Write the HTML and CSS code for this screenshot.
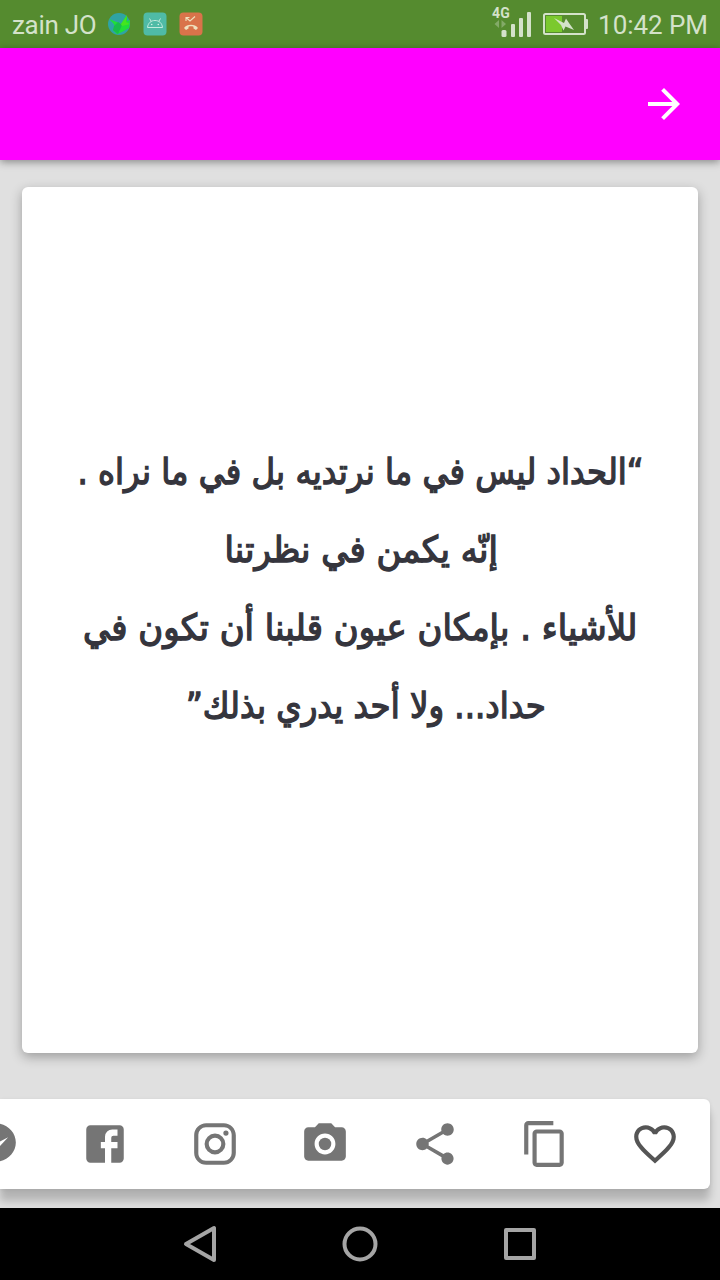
FILE: index.html
```html
<!DOCTYPE html>
<html lang="ar">
<head>
    <meta charset="UTF-8">
    <meta name="viewport" content="width=device-width, initial-scale=1.0">
    <title>Quote</title>
    <link rel="stylesheet" href="styles.css">
</head>
<body>
    <div class="status-bar">
        <div class="status-left">
            <span class="carrier">zain JO</span>
            <svg class="app-icon" viewBox="0 0 24 24">
                <circle cx="12" cy="12" r="11" fill="#2fa3a4"/>
                <path d="M2 7L11 10.5L14 12L20 3L20 9L23 8L22 16L15 20L10 22L6 18L8 14L6 11Z" fill="#20df37"/>
                <path d="M11 10L15 13L11 22L6 18L7 14Z" fill="#19bd4b"/>
                <path d="M14 12L20 3L19 10L23 12L15 14Z" fill="#45e51e"/>
            </svg>
            <svg class="app-icon" viewBox="0 0 24 24">
                <rect x="0.5" y="0.5" width="23" height="23" rx="4" fill="#4fbba6"/>
                <path d="M4.5 15.5C5 11 8 8.5 12 8.5S19 11 19.5 15.5ZM8 9L6.5 6.5M16 9L17.5 6.5" fill="none" stroke="#c5ebdd" stroke-width="1"/>
                <circle cx="8.7" cy="12.5" r="0.8" fill="#d8f2e6"/>
                <circle cx="15.3" cy="12.5" r="0.8" fill="#d8f2e6"/>
            </svg>
            <svg class="app-icon" viewBox="0 0 24 24">
                <rect x="0.5" y="0.5" width="23" height="23" rx="4" fill="#d9734a"/>
                <path d="M7 9V5.5H10.5M7 5.5L11 9L16 4.5" fill="none" stroke="#efe0bd" stroke-width="1.1"/>
                <path d="M5 16C8 11.6 16 11.6 19 16L17 18L14.5 16.5V14.7C13 14.2 11 14.2 9.5 14.7V16.5L7 18Z" fill="#efe0bd"/>
            </svg>
        </div>
        <div class="status-right">
            <div class="signal">
                <span class="network">4G</span>
                <svg width="40" height="32" viewBox="0 0 40 32">
                    <path d="M7 12V20L2.5 16ZM9.5 12V20L14 16Z" fill="#83aa68"/>
                    <g fill="#d4e2ca">
                        <rect x="9.5" y="22" width="5" height="7" rx="1.5"/>
                        <rect x="19" y="16" width="4" height="13" rx="1"/>
                        <rect x="27" y="10" width="4" height="19" rx="1"/>
                        <rect x="35" y="4" width="4" height="25" rx="1"/>
                    </g>
                </svg>
            </div>
            <svg class="battery" width="45" height="24" viewBox="0 0 45 24">
                <rect x="3" y="3" width="16" height="16" fill="#7bc92e"/>
                <rect x="1" y="1" width="41" height="20" rx="1.5" fill="none" stroke="#d4e2ca" stroke-width="2"/>
                <rect x="42.5" y="6" width="2.5" height="10" rx="1" fill="#d4e2ca"/>
                <path d="M11 5L21 10L23 5.5L26 10L31 17L22.5 13.5L20.5 17.5L18 12Z" fill="#d4e2ca"/>
            </svg>
            <span class="clock">10:42 PM</span>
        </div>
    </div>

    <header class="app-bar">
        <svg width="48" height="48" viewBox="0 0 24 24" fill="#fff">
            <path d="M12 4l-1.41 1.41L16.17 11H4v2h12.17l-5.58 5.59L12 20l8-8z"/>
        </svg>
    </header>

    <main class="content">
        <div class="card">
            <div class="quote" dir="rtl">
                <div class="line line-1"><span>“الحداد ليس في ما نرتديه بل في ما نراه .</span></div>
                <div class="line line-2"><span>إنّه يكمن في نظرتنا</span></div>
                <div class="line line-3"><span>للأشياء . بإمكان عيون قلبنا أن تكون في</span></div>
                <div class="line line-4"><span>حداد... ولا أحد يدري بذلك”</span></div>
            </div>
        </div>

        <div class="actions">
            <svg class="action" viewBox="0 0 24 24"><path d="M12,2C6.5,2 2,6.14 2,11.25C2,14.13 3.42,16.7 5.65,18.4L5.71,22L9.16,20.12C10.04,20.36 11,20.5 12,20.5C17.5,20.5 22,16.36 22,11.25C22,6.14 17.5,2 12,2M13.03,14.41L10.54,11.78L5.5,14.41L10.88,8.78L13.46,11.25L18.31,8.78L13.03,14.41Z"/></svg>
            <svg class="action" viewBox="0 0 24 24"><path d="M5,3H19A2,2 0 0,1 21,5V19A2,2 0 0,1 19,21H5A2,2 0 0,1 3,19V5A2,2 0 0,1 5,3M18,5H15.5A3.5,3.5 0 0,0 12,8.5V11H10V14H12V21H15V14H18V11H15V9A1,1 0 0,1 16,8H18V5Z"/></svg>
            <svg class="action" viewBox="0 0 24 24"><path d="M7.8,2H16.2C19.4,2 22,4.6 22,7.8V16.2A5.8,5.8 0 0,1 16.2,22H7.8C4.6,22 2,19.4 2,16.2V7.8A5.8,5.8 0 0,1 7.8,2M7.6,4A3.6,3.6 0 0,0 4,7.6V16.4C4,18.39 5.61,20 7.6,20H16.4A3.6,3.6 0 0,0 20,16.4V7.6C20,5.61 18.39,4 16.4,4H7.6M17.25,5.5A1.25,1.25 0 0,1 18.5,6.75A1.25,1.25 0 0,1 17.25,8A1.25,1.25 0 0,1 16,6.75A1.25,1.25 0 0,1 17.25,5.5M12,7A5,5 0 0,1 17,12A5,5 0 0,1 12,17A5,5 0 0,1 7,12A5,5 0 0,1 12,7M12,9A3,3 0 0,0 9,12A3,3 0 0,0 12,15A3,3 0 0,0 15,12A3,3 0 0,0 12,9Z"/></svg>
            <svg class="action" viewBox="0 0 24 24"><circle cx="12" cy="12" r="3"/><path d="M9 2L7.17 4H4c-1.1 0-2 .9-2 2v12c0 1.1.9 2 2 2h16c1.1 0 2-.9 2-2V6c0-1.1-.9-2-2-2h-3.17L15 2H9zm3 15c-2.76 0-5-2.24-5-5s2.24-5 5-5 5 2.24 5 5-2.24 5-5 5z"/></svg>
            <svg class="action" viewBox="0 0 24 24"><path d="M18 16.08c-.76 0-1.44.3-1.96.77L8.91 12.7c.05-.23.09-.46.09-.7s-.04-.47-.09-.7l7.05-4.11c.54.5 1.25.81 2.04.81 1.66 0 3-1.34 3-3s-1.34-3-3-3-3 1.34-3 3c0 .24.04.47.09.7L8.04 9.81C7.5 9.31 6.79 9 6 9c-1.66 0-3 1.34-3 3s1.34 3 3 3c.79 0 1.5-.31 2.04-.81l7.12 4.16c-.05.21-.08.43-.08.65 0 1.61 1.31 2.92 2.92 2.92s2.92-1.31 2.92-2.92-1.31-2.92-2.92-2.92z"/></svg>
            <svg class="action" viewBox="0 0 24 24"><path d="M16 1H4c-1.1 0-2 .9-2 2v14h2V3h12V1zm3 4H8c-1.1 0-2 .9-2 2v14c0 1.1.9 2 2 2h11c1.1 0 2-.9 2-2V7c0-1.1-.9-2-2-2zm0 16H8V7h11v14z"/></svg>
            <svg class="action action-like" viewBox="0 0 24 24"><path d="M16.5 3c-1.74 0-3.41.81-4.5 2.09C10.91 3.81 9.24 3 7.5 3 4.42 3 2 5.42 2 8.5c0 3.78 3.4 6.86 8.55 11.54L12 21.35l1.45-1.32C18.6 15.36 22 12.28 22 8.5 22 5.42 19.58 3 16.5 3zm-4.4 15.55l-.1.1-.1-.1C7.14 14.24 4 11.39 4 8.5 4 6.5 5.5 5 7.5 5c1.54 0 3.04.99 3.57 2.36h1.87C13.46 5.99 14.96 5 16.5 5c2 0 3.5 1.5 3.5 3.5 0 2.89-3.14 5.74-7.9 10.05z"/></svg>
        </div>
    </main>

    <nav class="nav-bar">
        <svg width="40" height="40" viewBox="0 0 40 40"><path d="M34 4V36L6 20Z"/></svg>
        <svg width="40" height="40" viewBox="0 0 40 40"><circle cx="20" cy="20" r="15.5"/></svg>
        <svg width="40" height="40" viewBox="0 0 40 40"><rect x="6" y="6" width="28" height="28"/></svg>
    </nav>
</body>
</html>
```
FILE: styles.css
```css
* {
    box-sizing: border-box;
}
body {
    margin: 0;
    width: 720px;
    height: 1280px;
    display: flex;
    flex-direction: column;
    overflow: hidden;
    background: #e0e0e0;
    font-family: Roboto, sans-serif;
}
svg {
    display: block;
    flex-shrink: 0;
}
.status-bar {
    height: 48px;
    flex-shrink: 0;
    display: flex;
    justify-content: space-between;
    padding: 0 12px;
    background: #558b2f;
    color: #d4e2ca;
    font-size: 26px;
}
.status-left, .status-right {
    display: flex;
    align-items: center;
}
.status-left {
    gap: 12px;
}
.carrier, .clock {
    line-height: 48px;
    padding-top: 2px;
    white-space: nowrap;
}
.carrier {
    width: 83px;
    letter-spacing: -0.3px;
}
.clock {
    letter-spacing: -0.05px;
}
.app-icon {
    width: 24px;
    height: 24px;
}
.signal {
    position: relative;
    margin-right: 11px;
}
.network {
    position: absolute;
    top: -2px;
    left: 0;
    font-size: 14px;
    line-height: 14px;
    font-weight: bold;
}
.battery {
    margin: 2px 10px 0 0;
}
.app-bar {
    height: 112px;
    flex-shrink: 0;
    display: flex;
    align-items: center;
    justify-content: flex-end;
    padding-right: 32px;
    background: #ff00ff;
    box-shadow: 0 2px 8px rgba(0, 0, 0, 0.4);
    z-index: 1;
}
.content {
    flex: 1;
    min-height: 0;
    padding-top: 27px;
    overflow: hidden;
    display: flex;
    flex-direction: column;
    align-items: flex-start;
}
.card {
    width: 676px;
    height: 866px;
    flex-shrink: 0;
    margin: 0 22px 46px;
    border-radius: 6px;
    background: #fff;
    box-shadow: 0 4px 12px rgba(0, 0, 0, 0.3);
    padding-top: 246px;
}
.quote {
    color: #35353d;
    font-family: "DejaVu Sans", sans-serif;
    font-size: 36px;
    -webkit-text-stroke: 1.4px #35353d;
}
.line {
    height: 78px;
    line-height: 78px;
    display: flex;
    justify-content: center;
    white-space: nowrap;
}
/* condensed lettering */
.line span {
    transform: scaleX(0.9);
}
.line-1, .line-2 {
    padding-left: 2px;
}
.line-2 span, .line-3 span {
    transform: scaleX(0.942);
}
.line-4 {
    padding-left: 12px;
}
.actions {
    width: 710px;
    height: 90px;
    flex-shrink: 0;
    display: flex;
    align-items: center;
    justify-content: flex-end;
    gap: 60px;
    padding-right: 30px;
    background: #fff;
    border-radius: 0 6px 6px 0;
    box-shadow: 0 12px 9px rgba(0, 0, 0, 0.2), 0 1px 4px rgba(0, 0, 0, 0.08);
}
.action {
    width: 50px;
    height: 50px;
    fill: #757575;
}
.action-like {
    fill: #555;
}
.nav-bar {
    height: 72px;
    flex-shrink: 0;
    display: flex;
    align-items: center;
    justify-content: center;
    gap: 120px;
    background: #000;
}
.nav-bar svg {
    fill: none;
    stroke: #a5a5a5;
    stroke-width: 4;
    stroke-linejoin: round;
}
```
